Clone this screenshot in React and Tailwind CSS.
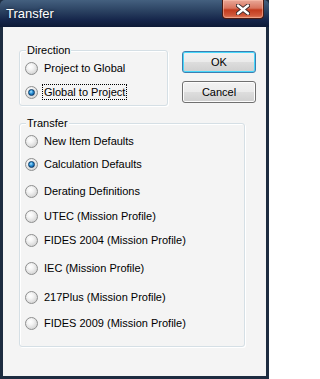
import React from "react";

const font = { fontFamily: '"Liberation Sans", Arial, sans-serif' };

function Radio({ label, checked, focus, className = "" }) {
  return (
    <div className={"flex h-[16px] items-center " + className}>
      <div
        className={
          "box-border h-[13px] w-[13px] shrink-0 rounded-full border border-[#8e8f8f] flex items-center justify-center " +
          "bg-[radial-gradient(circle_at_40%_35%,#ffffff_0%,#f4f4f4_30%,#d6d6d6_75%,#c4c4c4_100%)]"
        }
      >
        {checked && (
          <div className="h-[7px] w-[7px] rounded-full border border-[#0b3a66] bg-[radial-gradient(circle_at_40%_35%,#b8e6ff_0%,#3aa0e0_35%,#0d5aa0_80%,#0a3f78_100%)]" />
        )}
      </div>
      <span
        className={
          "ml-[4px] text-[11px] leading-[14px] text-black whitespace-nowrap px-[1px] " +
          (focus ? "border border-dotted border-black" : "border border-transparent")
        }
      >
        {label}
      </span>
    </div>
  );
}

function Group({ title, className = "", children }) {
  return (
    <div
      className={
        "relative box-border rounded-[3px] border border-[#d5dfe5] shadow-[inset_1px_1px_0_#ffffff,1px_1px_0_#ffffff] " +
        className
      }
    >
      <span className="absolute left-[6px] top-[-9px] h-[16px] bg-[#f4f4f4] px-[1px] text-[11px] leading-[16px] text-black">
        {title}
      </span>
      {children}
    </div>
  );
}

function Button({ children, isDefault }) {
  return (
    <div
      className={
        "box-border flex h-[22px] w-[74px] items-center justify-center rounded-[3px] border text-[11px] text-black " +
        "bg-[linear-gradient(to_bottom,#f2f2f2_0%,#ebebeb_48%,#dddddd_52%,#cfcfcf_100%)] " +
        (isDefault
          ? "border-[#3c7fb1] shadow-[inset_0_0_0_1px_#48d8fb]"
          : "border-[#707070] shadow-[inset_0_0_0_1px_#fcfcfc]")
      }
    >
      {children}
    </div>
  );
}

export default function App() {
  return (
    <div style={font} className="flex h-[379px] w-[269px] flex-col overflow-hidden bg-[#1d2c40]">
      {/* Title bar */}
      <div className="relative flex h-[27px] shrink-0 items-start rounded-t-[5px] bg-[linear-gradient(to_bottom,#44607f_0%,#2b4262_40%,#15254a_75%,#0d1a36_100%)]">
        <span className="ml-[6px] mt-[6px] text-[13px] leading-[16px] text-white [text-shadow:0_0_3px_rgba(0,0,0,0.6)]">
          Transfer
        </span>
        <div className="absolute right-[5px] top-0 flex h-[19px] w-[42px] items-center justify-center rounded-b-[4px] border border-t-0 border-[#4a1a12] bg-[linear-gradient(to_bottom,#e9a898_0%,#d8745e_45%,#c23b1e_55%,#d0583a_85%,#e08060_100%)] shadow-[inset_0_0_0_1px_rgba(255,200,180,0.5)]">
          <svg width="14" height="11" viewBox="0 0 14 11">
            <path d="M2 1.5 L12 9.5 M12 1.5 L2 9.5" stroke="#3b2a2a" strokeWidth="4.2" strokeLinecap="round" />
            <path d="M2 1.5 L12 9.5 M12 1.5 L2 9.5" stroke="#ffffff" strokeWidth="2.4" strokeLinecap="round" />
          </svg>
        </div>
      </div>

      {/* Client area */}
      <div className="mx-[3px] mb-[3px] flex flex-1 flex-col bg-[#f4f4f4] pl-[16px] pt-[23px]">
        <div className="flex items-start">
          <Group title="Direction" className="h-[56px] w-[149px] pl-[5px] pt-[9px]">
            <Radio label="Project to Global" />
            <Radio label="Global to Project" checked focus className="mt-[8px]" />
          </Group>
          <div className="ml-[14px] mt-[1px] flex flex-col gap-[8px]">
            <Button isDefault>OK</Button>
            <Button>Cancel</Button>
          </div>
        </div>

        <Group title="Transfer" className="mt-[17px] h-[224px] w-[226px] pl-[5px] pt-[9px]">
          <Radio label="New Item Defaults" />
          <Radio label="Calculation Defaults" checked className="mt-[7px]" />
          <Radio label="Derating Definitions" className="mt-[11px]" />
          <Radio label="UTEC (Mission Profile)" className="mt-[9px]" />
          <Radio label="FIDES 2004 (Mission Profile)" className="mt-[8px]" />
          <Radio label="IEC (Mission Profile)" className="mt-[12px]" />
          <Radio label="217Plus (Mission Profile)" className="mt-[13px]" />
          <Radio label="FIDES 2009 (Mission Profile)" className="mt-[10px]" />
        </Group>
      </div>
    </div>
  );
}
